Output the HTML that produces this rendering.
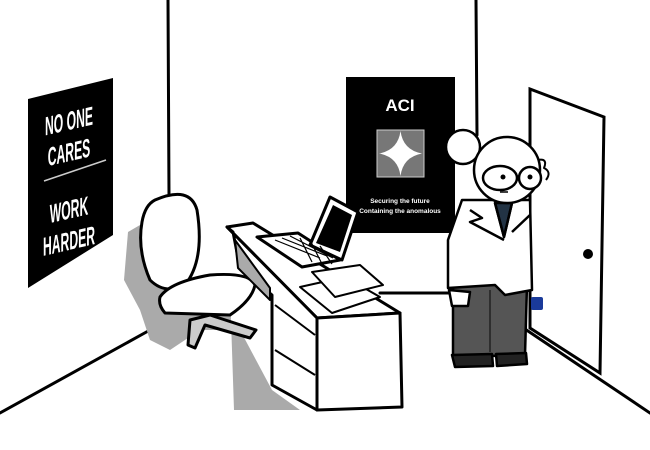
<!DOCTYPE html>
<html><head><style>
html,body{margin:0;padding:0;background:#fff;}
svg{display:block;}
</style></head><body>
<svg width="650" height="450" viewBox="0 0 650 450" xmlns="http://www.w3.org/2000/svg" font-family="Liberation Sans, sans-serif">
<rect width="650" height="450" fill="#fff"/>
<g stroke="#000" stroke-width="3" fill="none" stroke-linecap="round">
<path d="M168 0 L169 195"/>
<path d="M476 0 L477 135"/>
<path d="M0 413 L150 330"/>
<path d="M650 413 L522 327"/>
<path d="M380 293 L455 293"/>
</g>
<polygon points="28,99 113,78 113,235 28,288" fill="#000"/>
<g transform="translate(69,0) skewY(-13)" fill="#fff" font-weight="bold" text-anchor="middle">
<g transform="scale(0.58,1.25)">
<text x="0" y="104" font-size="21">NO ONE</text>
<text x="0" y="129" font-size="21">CARES</text>
<text x="0" y="175" font-size="21">WORK</text>
<text x="0" y="200" font-size="21">HARDER</text>
</g>
</g>
<path d="M44 181 L106 160" stroke="#ccc" stroke-width="1.5"/>
<rect x="346" y="77" width="109" height="156" fill="#000"/>
<text x="400" y="111" fill="#fff" font-size="17" font-weight="bold" text-anchor="middle">ACI</text>
<rect x="377" y="130" width="47" height="47" fill="#777" stroke="#ccc" stroke-width="1"/>
<path d="M400.5 131 Q403 150 422 153.5 Q403 157 400.5 176 Q398 157 379 153.5 Q398 150 400.5 131Z" fill="#fff"/>
<text x="400" y="203" fill="#fff" font-size="6.5" font-weight="bold" text-anchor="middle">Securing the future</text>
<text x="400" y="213" fill="#fff" font-size="6.5" font-weight="bold" text-anchor="middle">Containing the anomalous</text>
<polygon points="530,89 604,117 600,373 530,328" fill="#fff" stroke="#000" stroke-width="3"/>
<circle cx="588" cy="254" r="5" fill="#000"/>
<path d="M128 232 L152 218 L170 300 L230 290 L234 410 L300 410 L272 390 L240 330 L200 330 L170 350 L150 340 L140 310 L124 280 Z" fill="#aaa"/>
<g stroke="#000" stroke-width="3" fill="#fff" stroke-linejoin="round">
<path d="M190 320 L188 345 L195 348 L205 325 L250 338 L256 330 L210 315 Z" fill="#ccc"/>
<path d="M155 200 Q190 185 197 210 Q205 260 185 285 Q165 295 150 280 Q137 250 142 222 Q145 205 155 200Z"/>
<path d="M160 297 Q170 282 210 275 Q250 272 255 285 Q252 300 230 315 L165 313 Q158 305 160 297Z"/>
</g>
<g stroke="#000" stroke-width="3" stroke-linejoin="round">
<polygon points="227,227 253,223 400,313 317,318" fill="#fff"/>
<polygon points="227,227 317,318 317,410 272,385 272,295 240,268 233,232" fill="#fff"/>
<polygon points="235,240 270,288 270,300 238,268" fill="#aaa" stroke-width="2"/>
<polygon points="317,318 400,313 402,407 317,410" fill="#fff"/>
<path d="M275 305 L315 335 M275 350 L315 375" fill="none" stroke-width="2"/>
<polygon points="257,237 298,233 340,260 302,267" fill="#fff"/>
<polygon points="330,197 358,212 342,260 310,245" fill="#fff"/>
<polygon points="333,205 352,215 340,252 316,243" fill="#000" stroke="none"/>
<polygon points="300,287 345,277 380,297 332,313" fill="#fff" stroke-width="2"/>
<polygon points="312,272 360,265 383,285 335,297" fill="#fff" stroke-width="2"/>
</g>
<g stroke="#000" stroke-width="1.2">
<path d="M275 240 L320 258 M282 238 L327 256 M290 236 L333 258 M300 238 L312 262 M310 240 L322 264 M320 246 L332 264"/>
</g>
<g stroke="#000" stroke-width="2.5" stroke-linejoin="round">
<polygon points="453,283 527,285 525,355 453,357" fill="#555"/>
<path d="M490 290 L490 352" fill="none" stroke="#222" stroke-width="1.5"/>
<path d="M452 355 L492 354 L493 366 L455 367Z M496 354 L526 353 L527 364 L497 366Z" fill="#222"/>
<path d="M462 200 L530 200 L532 290 L505 295 L495 285 L448 288 L448 240 Z" fill="#fff"/>
<polygon points="495,203 512,203 504,237" fill="#234"/>
<path d="M495 203 L504 237 L512 203 M470 210 L482 218 L470 222 L504 240 M530 215 L512 232" fill="none"/>
<path d="M449 290 L470 292 L468 306 L452 306 Z" fill="#fff"/>
<circle cx="463" cy="147" r="17" fill="#fff"/>
<circle cx="507" cy="170" r="33" fill="#fff"/>
<ellipse cx="500" cy="178" rx="17" ry="12" fill="#fff"/>
<ellipse cx="530" cy="178" rx="11" ry="11" fill="#fff"/>
<path d="M538 160 Q548 158 544 168 Q552 172 546 180" fill="none" stroke-width="2"/>
<path d="M500 192 L508 192" stroke-width="1.5"/>
</g>
<circle cx="503" cy="177" r="2.5" fill="#000"/>
<circle cx="530" cy="177" r="2.5" fill="#000"/>
<rect x="531" y="297" width="12" height="13" fill="#1a3a9a" rx="2"/>
</svg>
</body></html>
